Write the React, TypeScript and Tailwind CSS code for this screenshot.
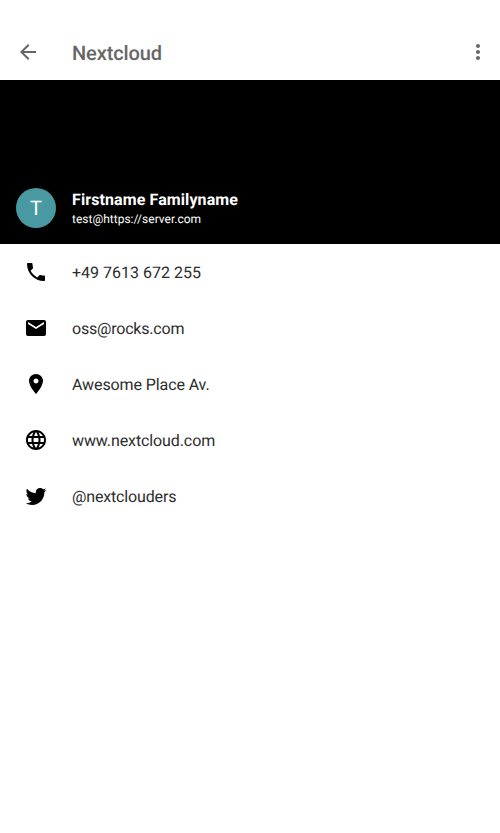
import React from "react";

const icons = {
  back: "M20 11H7.83l5.59-5.59L12 4l-8 8 8 8 1.41-1.41L7.83 13H20v-2z",
  more: "M12 8c1.1 0 2-.9 2-2s-.9-2-2-2-2 .9-2 2 .9 2 2 2zm0 2c-1.1 0-2 .9-2 2s.9 2 2 2 2-.9 2-2-.9-2-2-2zm0 6c-1.1 0-2 .9-2 2s.9 2 2 2 2-.9 2-2-.9-2-2-2z",
  phone: "M6.62 10.79c1.44 2.83 3.76 5.14 6.59 6.59l2.2-2.2c.27-.27.67-.36 1.02-.24 1.12.37 2.33.57 3.57.57.55 0 1 .45 1 1V20c0 .55-.45 1-1 1-9.39 0-17-7.61-17-17 0-.55.45-1 1-1h3.5c.55 0 1 .45 1 1 0 1.25.2 2.45.57 3.57.11.35.03.74-.25 1.02l-2.2 2.2z",
  email: "M20 4H4c-1.1 0-1.99.9-1.99 2L2 18c0 1.1.9 2 2 2h16c1.1 0 2-.9 2-2V6c0-1.1-.9-2-2-2zm0 4l-8 5-8-5V6l8 5 8-5v2z",
  place: "M12 2C8.13 2 5 5.13 5 9c0 5.25 7 13 7 13s7-7.75 7-13c0-3.87-3.13-7-7-7zm0 9.5c-1.38 0-2.5-1.12-2.5-2.5s1.12-2.5 2.5-2.5 2.5 1.12 2.5 2.5-1.12 2.5-2.5 2.5z",
  web: "M11.99 2C6.47 2 2 6.48 2 12s4.47 10 9.99 10C17.52 22 22 17.52 22 12S17.52 2 11.99 2zm6.93 6h-2.95c-.32-1.25-.78-2.45-1.38-3.56 1.84.63 3.37 1.91 4.33 3.56zM12 4.04c.83 1.2 1.48 2.53 1.91 3.96h-3.82c.43-1.43 1.08-2.76 1.91-3.96zM4.26 14C4.1 13.36 4 12.69 4 12s.1-1.36.26-2h3.38c-.08.66-.14 1.32-.14 2s.06 1.34.14 2H4.26zm.82 2h2.95c.32 1.25.78 2.45 1.38 3.56-1.84-.63-3.37-1.9-4.33-3.56zm2.95-8H5.08c.96-1.66 2.49-2.93 4.33-3.56C8.81 5.55 8.35 6.75 8.03 8zM12 19.96c-.83-1.2-1.48-2.53-1.91-3.96h3.82c-.43 1.43-1.08 2.76-1.91 3.96zM14.34 14H9.66c-.09-.66-.16-1.32-.16-2s.07-1.35.16-2h4.68c.09.65.16 1.32.16 2s-.07 1.34-.16 2zm.25 5.56c.6-1.11 1.06-2.31 1.38-3.56h2.95c-.96 1.65-2.49 2.93-4.33 3.56zM16.36 14c.08-.66.14-1.32.14-2s-.06-1.34-.14-2h3.38c.16.64.26 1.31.26 2s-.1 1.36-.26 2h-3.38z",
  twitter: "M22.46 6c-.77.35-1.6.58-2.46.69.88-.53 1.56-1.37 1.88-2.38-.83.5-1.75.85-2.72 1.05C18.37 4.5 17.26 4 16 4c-2.35 0-4.27 1.92-4.27 4.29 0 .34.04.67.11.98C8.28 9.09 5.11 7.38 3 4.79c-.37.63-.58 1.37-.58 2.15 0 1.49.75 2.81 1.91 3.56-.71 0-1.37-.2-1.95-.5v.03c0 2.08 1.48 3.82 3.44 4.21a4.22 4.22 0 0 1-1.93.07 4.28 4.28 0 0 0 4 2.98 8.521 8.521 0 0 1-5.33 1.84c-.34 0-.68-.02-1.02-.06C3.44 20.29 5.7 21 8.12 21 16 21 20.33 14.46 20.33 8.79c0-.19 0-.37-.01-.56.84-.6 1.56-1.36 2.14-2.23z",
};

function Icon({ name }: { name: keyof typeof icons }) {
  return (
    <svg viewBox="0 0 24 24" className="size-6 shrink-0" fill="currentColor" aria-hidden="true">
      <path d={icons[name]} />
    </svg>
  );
}

const details: { icon: keyof typeof icons; text: string; tracking: string }[] = [
  { icon: "phone", text: "+49 7613 672 255", tracking: "tracking-normal" },
  { icon: "email", text: "oss@rocks.com", tracking: "tracking-[-0.2px]" },
  { icon: "place", text: "Awesome Place Av.", tracking: "tracking-[-0.1px]" },
  { icon: "web", text: "www.nextcloud.com", tracking: "tracking-[-0.1px]" },
  { icon: "twitter", text: "@nextclouders", tracking: "tracking-[-0.15px]" },
];

export default function App() {
  return (
    <div className="min-h-screen bg-white pt-6 font-['Roboto',sans-serif] [text-rendering:geometricPrecision]">
      <header className="flex h-14 items-center pr-2.5 pl-4 text-[#666666]">
        <button className="mr-8" aria-label="Back"><Icon name="back" /></button>
        <h1 className="flex-1 pt-0.5 text-xl font-medium tracking-[-0.1px]">Nextcloud</h1>
        <button aria-label="More options"><Icon name="more" /></button>
      </header>
      <section className="flex h-41 items-end bg-black px-4 pb-4 text-white">
        <div className="mr-4 flex size-10 items-center justify-center rounded-full bg-[#4999a2] text-xl">T</div>
        <div className="flex h-10 flex-col justify-center pt-0.5">
          <h2 className="text-base leading-5 font-bold tracking-[0.1px]">Firstname Familyname</h2>
          <p className="text-xs leading-[18px]">test@https://server.com</p>
        </div>
      </section>
      <ul>
        {details.map((d) => (
          <li key={d.icon} className="flex h-14 items-center gap-6 pl-6 text-black">
            <Icon name={d.icon} />
            <span className={`pt-0.5 text-base text-[#2c2c2c] ${d.tracking}`}>{d.text}</span>
          </li>
        ))}
      </ul>
    </div>
  );
}
